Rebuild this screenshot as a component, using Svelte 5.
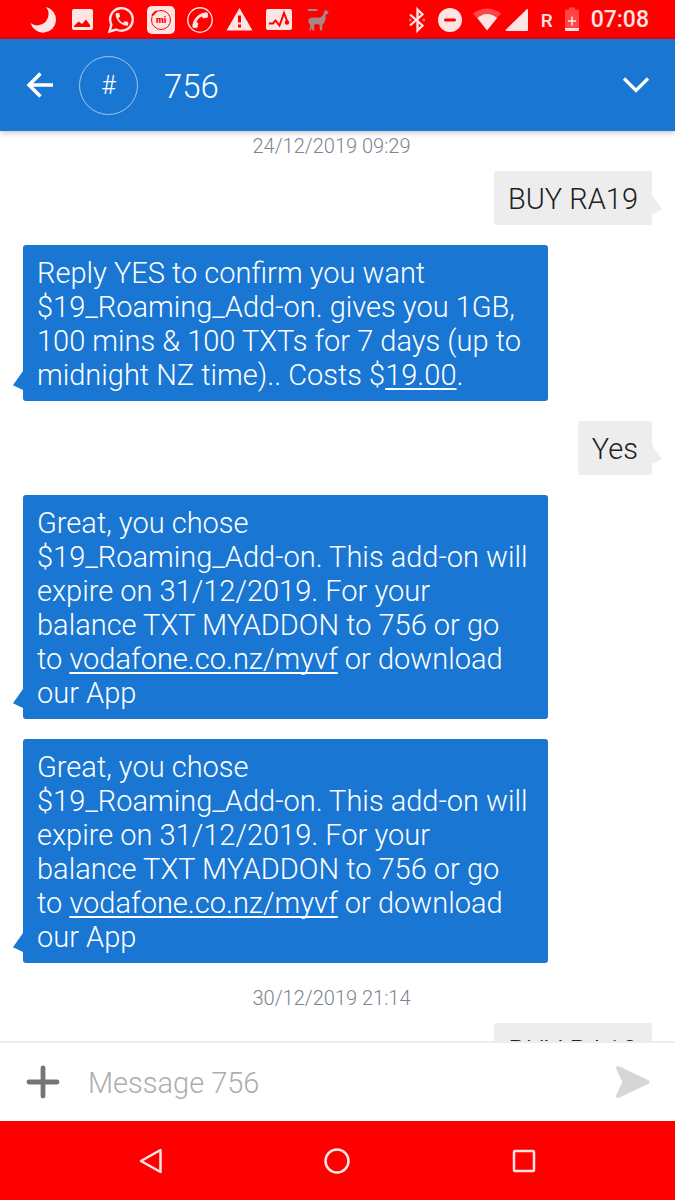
<script>
  const contact = "756";

  const addonText =
    "Great, you chose\n$19_Roaming_Add-on. This add-on will\nexpire on 31/12/2019. For your\nbalance TXT MYADDON to 756 or go\nto ";

  // each message is a list of parts, a part with href is drawn as a link
  const thread = [
    { type: "date", text: "24/12/2019 09:29" },
    { type: "sent", parts: [{ text: "BUY RA19" }] },
    {
      type: "received",
      parts: [
        {
          text: "Reply YES to confirm you want\n$19_Roaming_Add-on. gives you 1GB,\n100 mins & 100 TXTs for 7 days (up to\nmidnight NZ time).. Costs $",
        },
        { text: "19.00", href: "#amount" },
        { text: "." },
      ],
    },
    { type: "sent", parts: [{ text: "Yes" }] },
    {
      type: "received",
      parts: [
        { text: addonText },
        { text: "vodafone.co.nz/myvf", href: "#myvf" },
        { text: " or download\nour App" },
      ],
    },
    {
      type: "received",
      parts: [
        { text: addonText },
        { text: "vodafone.co.nz/myvf", href: "#myvf" },
        { text: " or download\nour App" },
      ],
    },
    { type: "date", text: "30/12/2019 21:14" },
    { type: "sent", parts: [{ text: "BUY RA19" }] },
  ];

  const handset =
    "M20.01 15.38c-1.23 0-2.42-.2-3.53-.56-.35-.12-.74-.03-1.01.24l-1.57 1.97c-2.83-1.35-5.48-3.9-6.89-6.83l1.95-1.66c.27-.28.35-.67.24-1.02-.37-1.11-.56-2.3-.56-3.53 0-.54-.45-.99-.99-.99H4.19C3.65 3 3 3.24 3 3.99 3 13.28 10.73 21 20.01 21c.71 0 .99-.63.99-1.18v-3.45c0-.54-.45-.99-.99-.99z";

  let draft = $state("");
</script>

<div class="phone">
  <div class="status">
    <div class="notifications">
      <!-- moon -->
      <svg width="28" height="28" viewBox="0 0 28 28">
        <path d="M17 1A13 13 0 1 1 1.500 17A11.200 11.200 0 0 0 17 1z" />
      </svg>
      <!-- picture -->
      <svg width="28" height="28" viewBox="0 0 28 28">
        <path
          fill-rule="evenodd"
          d="M6 3h17a2 2 0 0 1 2 2v17a2 2 0 0 1-2 2H6a2 2 0 0 1-2-2V5a2 2 0 0 1 2-2zM6 21h16v-2l-4-5.500-4 4.500-3.500-2.500L6 20z"
        />
      </svg>
      <!-- whatsapp -->
      <svg width="28" height="28" viewBox="0 0 28 28">
        <path
          class="line"
          stroke-width="2.400"
          d="M2.500 25.500L4.400 18.600A11.300 11.300 0 1 1 9.300 23.500z"
        />
        <path transform="translate(6.500 5) scale(.7)" d={handset} />
      </svg>
      <!-- mi -->
      <svg width="28" height="28" viewBox="0 0 28 28">
        <rect x="1" width="28" height="28" rx="5" />
        <circle cx="15" cy="14" r="9.500" fill="none" stroke="#f00" />
        <path d="M5 9L9.500 4.500" stroke="#ffe4e4" stroke-width="5" />
        <path d="M6.500 9L10 5.500" stroke="#f00" stroke-width="2" stroke-linecap="round" />
        <text class="mi" x="15" y="17" text-anchor="middle">mi</text>
      </svg>
      <!-- call -->
      <svg width="28" height="28" viewBox="0 0 28 28">
        <circle class="line" cx="15" cy="14" r="12.200" stroke-width="1.400" />
        <path
          transform="rotate(90 15 14) translate(5.400 4) scale(.82)"
          stroke="#ffe4e4"
          d={handset}
        />
      </svg>
      <!-- warning -->
      <svg width="28" height="28" viewBox="0 0 28 28">
        <path
          fill-rule="evenodd"
          d="M15.500 2L28.500 24.500H2.500zM14 9.500v7h3v-7zM14 18.500v3h3v-3z"
        />
      </svg>
      <!-- activity -->
      <svg width="28" height="28" viewBox="0 0 28 28">
        <rect x="3" y="3" width="26" height="21" rx="2" />
        <path
          d="M6 17.500h4l2.500-3 4 5L21 7l3.500 9"
          fill="none"
          stroke="#f00"
          stroke-width="2"
        />
        <circle cx="24" cy="16.500" r="2.200" fill="#f00" />
      </svg>
      <!-- llama -->
      <svg width="28" height="28" viewBox="0 0 28 28">
        <path
          fill="#a88586"
          d="M6 3h9.500v2H6zM22.500 5l1.500-1.500.8 1.500 1.700 1.200-.5 1.800-2.200.3-.3 5.200-1.500 3.500-1.500 1.500-.5 6h-2l-.5-6-4-.5-1.500 1.500.5 5h-2l-1-3-.5 3H7.500l.8-5.500-1.800-2.500v-3l2-1.800 9.500-.2 2.500-1.500z"
        />
      </svg>
    </div>

    <div class="system">
      <!-- bluetooth -->
      <svg width="18" height="28" viewBox="0 0 18 28">
        <path class="line" stroke-width="2.300" d="M2 8.500L14.500 19.500 9.500 24.500V3.500L14.500 8.500 2 19.500" />
        <path d="M1 12.800h2.400v2.400H1zM14.600 12.800H17v2.400h-2.400z" opacity=".5" />
      </svg>
      <!-- do not disturb -->
      <svg width="24" height="28" viewBox="0 0 24 28">
        <circle cx="12" cy="14" r="12" />
        <path d="M7.500 14h9" stroke="#f00" stroke-width="3" stroke-linecap="round" />
      </svg>
      <!-- wifi and signal -->
      <svg width="55" height="28" viewBox="0 0 55 28">
        <path opacity=".3" d="M-1 7.500Q13 -2.500 27 7.500L13 24.500z" />
        <path d="M3.500 12Q13 4 23 12L13 24.500z" />
        <path d="M54 4v20a1 1 0 0 1-1 1H32.500q-1.500 0-.5-1.500L52.500 3.500q1.500-1 1.500.5z" />
      </svg>
      <span class="roaming">R</span>
      <!-- battery -->
      <svg width="14" height="28" viewBox="0 0 14 28">
        <path opacity=".3" d="M4 1.500h6v2h3a1 1 0 0 1 1 1V22H0V4.500a1 1 0 0 1 1-1h3z" />
        <path d="M0 22h14v2a1 1 0 0 1-1 1H1a1 1 0 0 1-1-1zM6.200 10.500h1.600v3.700H11v1.600H7.800v3.700H6.200v-3.700H3v-1.600h3.200z" />
      </svg>
      <span class="clock">07:08</span>
    </div>
  </div>

  <header>
    <button class="back" aria-label="Back">
      <svg width="26" height="26" viewBox="0 0 26 26">
        <path d="M26 13H3M13.500 1.500L2 13l11.500 11.500" fill="none" stroke="#fff" stroke-width="3.500" />
      </svg>
    </button>
    <div class="avatar">#</div>
    <h1>{contact}</h1>
    <button aria-label="More">
      <svg width="26" height="16" viewBox="0 0 26 16">
        <path d="M1 1.500l12 12 12-12" fill="none" stroke="#fff" stroke-width="3.200" />
      </svg>
    </button>
  </header>

  <main>
    {#each thread as item}
      {#if item.type === "date"}
        <time>{item.text}</time>
      {:else}
        <p class="bubble {item.type}">{#each item.parts as part}{#if part.href}<a href={part.href}>{part.text}</a>{:else}{part.text}{/if}{/each}</p>
      {/if}
    {/each}
  </main>

  <form class="composer" onsubmit={(e) => e.preventDefault()}>
    <button type="button" aria-label="Attach">
      <svg width="34" height="34" viewBox="0 0 34 34">
        <path
          d="M17 3v28M3 17h28"
          stroke="#757575"
          stroke-width="4.800"
          stroke-linecap="round"
        />
      </svg>
    </button>
    <input
      type="text"
      aria-label="Message"
      placeholder="Message {contact}"
      bind:value={draft}
    />
    <button type="submit" aria-label="Send">
      <svg width="34" height="34" viewBox="0 0 34 34">
        <path
          d="M3 1.200L32.500 15.200q2 1.800 0 3.600L3 32.800Q-.5 33.500.3 30L6.300 17 .3 4Q-.5.500 3 1.200z"
          fill="#d6d6d6"
        />
      </svg>
    </button>
  </form>

  <nav>
    <button aria-label="Back">
      <svg width="26" height="26" viewBox="0 0 26 26">
        <path d="M22.500 2v22L3 13z" stroke-linejoin="round" />
      </svg>
    </button>
    <button aria-label="Home">
      <svg width="26" height="26" viewBox="0 0 26 26">
        <circle cx="13" cy="13" r="11.500" />
      </svg>
    </button>
    <button aria-label="Recent apps">
      <svg width="26" height="26" viewBox="0 0 26 26">
        <rect x="3" y="3" width="20" height="20" rx="1" />
      </svg>
    </button>
  </nav>
</div>

<style>
  .phone {
    display: flex;
    flex-direction: column;
    height: 100vh;
    background: #fff;
    font-family: Roboto, sans-serif;
    font-weight: 300;
  }

  button {
    display: flex;
    align-items: center;
    justify-content: center;
    padding: 0;
    border: 0;
    background: none;
    cursor: pointer;
  }

  svg {
    display: block;
    flex: none;
    overflow: visible;
  }

  .status {
    display: flex;
    flex: none;
    align-items: center;
    justify-content: space-between;
    box-sizing: border-box;
    height: 39px;
    padding: 1px 26px 0 29px;
    background: #f00;
    color: #ffe4e4;
  }
  .status svg {
    fill: #ffe4e4;
  }
  .status .line {
    fill: none;
    stroke: #ffe4e4;
  }
  .notifications {
    display: flex;
    gap: 11px;
  }
  .system {
    display: flex;
    align-items: center;
    gap: 12px;
  }
  .mi {
    fill: #f00;
    font-size: 9px;
    font-weight: 900;
  }
  .roaming {
    font-size: 19px;
    font-weight: 500;
  }
  .clock {
    font-size: 23px;
    font-weight: 500;
    line-height: 28px;
  }

  header {
    position: relative;
    display: flex;
    flex: none;
    align-items: center;
    height: 92px;
    padding: 0 26px 0 27px;
    background: #1976d2;
    color: #fff;
    box-shadow: 0 1px 6px rgba(0, 0, 0, 0.3);
  }
  .back {
    margin-right: 26px;
  }
  .avatar {
    display: flex;
    align-items: center;
    justify-content: center;
    box-sizing: border-box;
    width: 59px;
    height: 59px;
    border: 1px solid #a3c8ed;
    border-radius: 50%;
    font-size: 25px;
  }
  h1 {
    flex: 1;
    margin: 0 0 0 26px;
    padding-top: 2px;
    font-size: 33px;
    font-weight: 300;
  }

  main {
    display: flex;
    flex: 1;
    flex-direction: column;
    min-height: 0;
    padding: 0 23px;
    overflow-y: auto;
    scrollbar-width: none;
  }
  time {
    flex: none;
    align-self: center;
    margin: 0 12px 10px 0;
    color: #7b8490;
    font-size: 20px;
    line-height: 30px;
  }
  .bubble {
    position: relative;
    flex: none;
    box-sizing: border-box;
    margin: 0 0 20px;
    padding: 11px 14px 9px;
    border-radius: 3px;
    font-size: 29px;
    line-height: 34px;
    white-space: pre-line;
  }
  .bubble::before {
    content: "";
    position: absolute;
    bottom: 11px;
    width: 10px;
    height: 19px;
    background: inherit;
  }
  .sent {
    align-self: flex-end;
    background: #ededed;
    color: #212121;
  }
  .sent::before {
    left: 100%;
    clip-path: polygon(0 0, 100% 75%, 0 100%);
  }
  .received {
    align-self: flex-start;
    width: calc(100% - 104px);
    background: #1976d2;
    color: #fff;
  }
  .received::before {
    right: 100%;
    clip-path: polygon(100% 0, 0 75%, 100% 100%);
  }
  a {
    color: inherit;
    text-decoration-thickness: 2px;
    text-decoration-skip-ink: none;
    text-underline-offset: 3px;
  }

  .composer {
    display: flex;
    flex: none;
    align-items: center;
    box-sizing: border-box;
    height: 80px;
    padding: 0 25px 0 26px;
    border-top: 2px solid #ededed;
  }
  .composer input {
    flex: 1;
    min-width: 0;
    margin: 0 28px;
    padding: 2px 0 0;
    border: 0;
    outline: 0;
    background: none;
    color: #212121;
    font: inherit;
    font-size: 29px;
  }
  .composer input::placeholder {
    color: #adadad;
  }

  nav {
    display: grid;
    flex: none;
    grid-template-columns: repeat(3, 1fr);
    height: 79px;
    padding: 0 58px;
    background: #f00;
  }
  nav svg {
    fill: none;
    stroke: #ffe4e4;
    stroke-width: 2.5;
  }
</style>
